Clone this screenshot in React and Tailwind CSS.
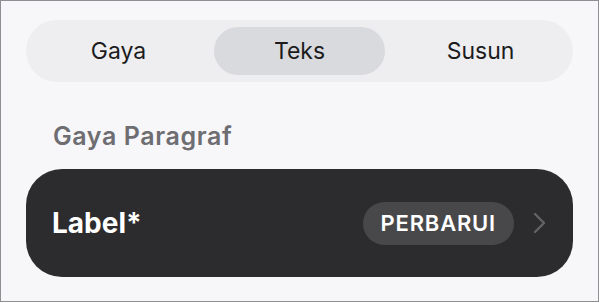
import React, { useState } from "react";

const tabs = ["Gaya", "Teks", "Susun"];

function SegmentedControl() {
  const [active, setActive] = useState("Teks");

  return (
    <div className="grid h-[62px] grid-cols-3 gap-[10px] rounded-full bg-[#eeeef0] p-[7px]">
      {tabs.map((t) => (
        <button
          key={t}
          onClick={() => setActive(t)}
          className={
            "flex items-center justify-center rounded-full text-[23px] leading-none text-[#1c1c1e] " +
            (active === t ? "bg-[#d9dadd]" : "bg-transparent")
          }
        >
          {t}
        </button>
      ))}
    </div>
  );
}

export default function App() {
  return (
    <div
      className="h-[302px] w-[599px] border border-[#8e8e93] bg-[#f7f7f9] px-[25px] pt-[19px]"
      style={{ fontFamily: "Inter, 'Noto Sans', sans-serif" }}
    >
      <SegmentedControl />

      <h2 className="mt-[39px] pl-[27px] text-[25px] leading-[30px] font-semibold tracking-[0.6px] text-[#6d6d72]">
        Gaya Paragraf
      </h2>

      <div className="mt-[18px] flex h-[108px] items-center rounded-[36px] bg-[#2c2c2e] pl-[26px] pr-[27px]">
        <span className="text-[28px] font-bold text-white">Label*</span>
        <div className="ml-auto flex items-center gap-[19px]">
          <span className="flex h-[43px] items-center rounded-full bg-[#48484a] px-[18px] text-[22px] font-semibold tracking-[0.8px] text-white">
            PERBARUI
          </span>
          <svg width="13" height="22" viewBox="0 0 13 22" fill="none">
            <path
              d="M2 2l9 9-9 9"
              stroke="#636366"
              strokeWidth="2.4"
              strokeLinecap="round"
              strokeLinejoin="round"
            />
          </svg>
        </div>
      </div>
    </div>
  );
}
